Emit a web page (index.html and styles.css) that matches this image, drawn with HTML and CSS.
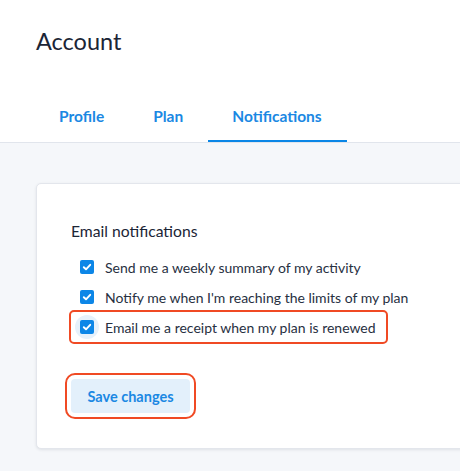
FILE: index.html
```html
<!DOCTYPE html>
<html>
<head>
<meta charset="utf-8">
<link rel="stylesheet" href="styles.css">
</head>
<body>
<header class="header">
  <h1 class="title">Account</h1>
  <nav class="tabs">
    <a class="tab">Profile</a>
    <a class="tab">Plan</a>
    <a class="tab tab-active">Notifications</a>
  </nav>
</header>
<main class="main">
  <section class="card">
    <h2 class="section-title">Email notifications</h2>
    <div class="options">
      <label class="option"><span class="box"><svg viewBox="0 0 14 14"><path d="M3.8 7.2 L6 9.3 L10.2 4.8" fill="none" stroke="#fff" stroke-width="1.9" stroke-linecap="round" stroke-linejoin="round"/></svg></span><span class="label">Send me a weekly summary of my activity</span></label>
      <label class="option"><span class="box"><svg viewBox="0 0 14 14"><path d="M3.8 7.2 L6 9.3 L10.2 4.8" fill="none" stroke="#fff" stroke-width="1.9" stroke-linecap="round" stroke-linejoin="round"/></svg></span><span class="label">Notify me when I'm reaching the limits of my plan</span></label>
      <label class="option option-highlight"><span class="box box-focus"><svg viewBox="0 0 14 14"><path d="M3.8 7.2 L6 9.3 L10.2 4.8" fill="none" stroke="#fff" stroke-width="1.9" stroke-linecap="round" stroke-linejoin="round"/></svg></span><span class="label">Email me a receipt when my plan is renewed</span></label>
    </div>
    <button class="save">Save changes</button>
  </section>
</main>
</body>
</html>
```
FILE: styles.css
```css
html, body {
  margin: 0;
  padding: 0;
  height: 100%;
}
body {
  font-family: Lato, "Open Sans", sans-serif;
  color: #1d2738;
  background: #f5f7fa;
  overflow: hidden;
}
.header {
  background: #fff;
  padding: 26px 0 0 35px;
  border-bottom: 1px solid #e1e5ec;
}
.title {
  margin: 0 0 0 1px;
  font-size: 23.5px;
  line-height: 30px;
  font-weight: 400;
  color: #1b2536;
}
.tabs {
  display: flex;
  margin-top: 36px;
}
.tab {
  padding: 14px 25px 14px 24px;
  font-size: 15.5px;
  line-height: 20px;
  font-weight: 700;
  color: #1b88e3;
  border-bottom: 2px solid transparent;
}
.tab-active {
  border-bottom-color: #0a86e6;
}
.main {
  padding: 40px 0 0 36px;
}
.card {
  width: 600px;
  background: #fff;
  border: 1px solid #e3e6ec;
  border-radius: 5px;
  box-shadow: 0 1px 3px rgba(30, 40, 60, 0.10);
  padding: 37px 0 35px 34px;
}
.section-title {
  margin: 0;
  font-size: 15.7px;
  line-height: 20px;
  font-weight: 400;
  color: #1b2536;
}
.options {
  margin-top: 11px;
  display: flex;
  flex-direction: column;
  align-items: flex-start;
}
.option {
  position: relative;
  z-index: 0;
  display: flex;
  align-items: center;
  height: 30px;
  padding: 0 10px 0 9px;
  font-size: 14px;
  color: #27303f;
  border-radius: 3px;
}
.option-highlight {
  outline: 2px solid #f04a24;
  outline-offset: 0;
}
.box {
  position: relative;
  width: 14px;
  height: 14px;
  border-radius: 2px;
  background: #0c86e7;
  margin-right: 11px;
  flex: none;
}
.box svg {
  position: relative;
  display: block;
  width: 14px;
  height: 14px;
}
.box-focus::before {
  content: "";
  position: absolute;
  z-index: -1;
  left: -5px;
  top: -5px;
  width: 24px;
  height: 24px;
  border-radius: 50%;
  background: #e6f1fb;
}
.save {
  margin-top: 37px;
  display: block;
  width: 119px;
  height: 34px;
  border: 0;
  border-radius: 4px;
  background: #e3f0fb;
  color: #1b88e3;
  font-family: inherit;
  font-size: 14.5px;
  font-weight: 700;
  outline: 2px solid #f04a24;
  outline-offset: 4px;
}
```
